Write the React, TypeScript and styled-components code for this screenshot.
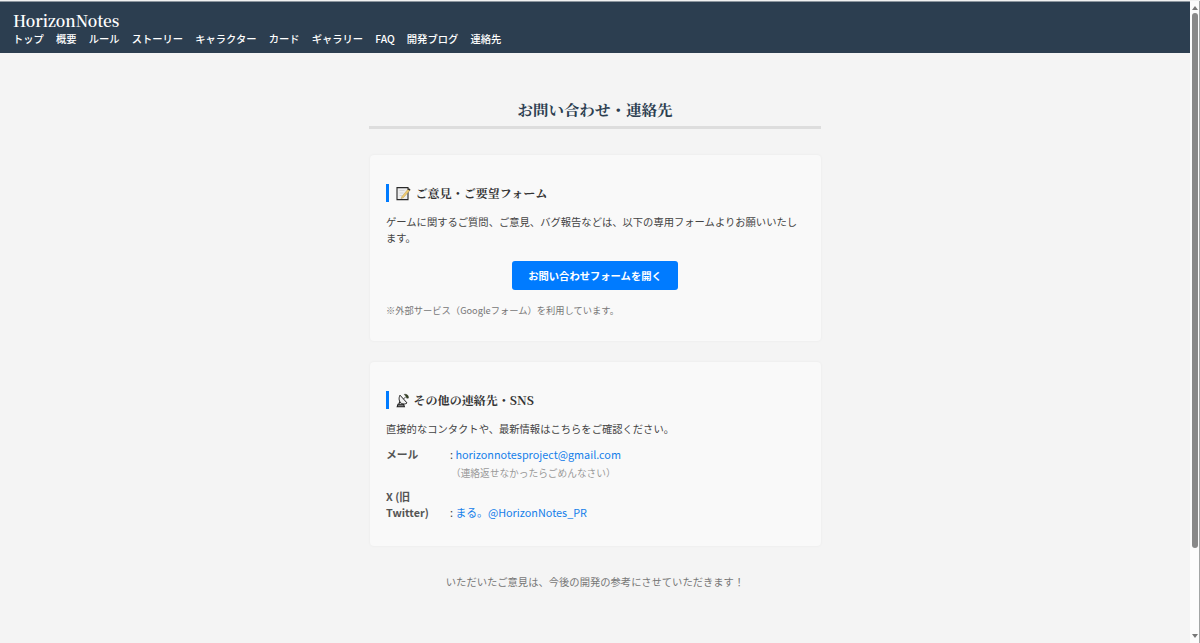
import React from "react";
import styled, { createGlobalStyle } from "styled-components";

const sans = `"Noto Sans CJK JP", sans-serif`;
const serif = `"Noto Serif JP", "Noto Serif CJK JP", "Liberation Serif", "Noto Sans CJK JP", serif`;

const GlobalStyle = createGlobalStyle`
  * { box-sizing: border-box; }
  body { margin: 0; background: #f4f4f4; overflow: hidden; }
  h1, h2, h3, p, dl, dd, dt { margin: 0; }
  a { color: inherit; text-decoration: none; }
`;

const Screen = styled.div`
  display: flex;
  height: 643px;
  overflow: hidden;
  background: #f4f4f4;
  border-top: 1px solid #f1f1f1;
  font-family: ${sans};
  font-size: 10.31px;
  line-height: 15.5px;
  color: #444;
`;

const Page = styled.div`
  width: 1190px;
  flex: none;
`;

const Header = styled.header`
  height: 52px;
  padding: 8px 13px 0;
  border-top: 1px solid #8d969f;
  background: #2c3e50;
  color: #fff;
`;

const Brand = styled.h1`
  font: 600 15.45px/20px ${serif};
  white-space: nowrap;
`;

const Nav = styled.nav`
  display: flex;
  gap: 12.1px;
  margin-top: 1px;
  font-weight: 500;
  line-height: 16px;
  white-space: nowrap;
`;

const Main = styled.main`
  width: 452px;
  margin: 0 auto;
  padding-top: 45px;
`;

const Title = styled.h2`
  height: 31px;
  border-bottom: 3px solid #ddd;
  color: #2c3e50;
  font: 700 15.5px/23px ${serif};
  text-align: center;
`;

const Card = styled.section<{ $height: number; $gap: number }>`
  width: 451px;
  height: ${(p) => p.$height}px;
  margin: ${(p) => p.$gap}px 0 0 1px;
  padding: 29px 16px 0;
  border-radius: 4px;
  background: #f9f9f9;
  box-shadow: 0 0 3px rgba(0, 0, 0, 0.05);
`;

const CardTitle = styled.h3`
  display: flex;
  align-items: center;
  height: 18px;
  padding-left: 7px;
  border-left: 3px solid #007bff;
  color: #333;
  font: 700 12.06px/18px ${serif};
  white-space: nowrap;
`;

const Icon = styled.svg<{ $gap: number }>`
  width: 15px;
  height: 16px;
  flex: none;
  margin-right: ${(p) => p.$gap}px;
`;

const Text = styled.p`
  margin-top: 12px;
`;

const Button = styled.a`
  display: block;
  width: 166px;
  height: 29px;
  margin: 16px auto 0 126px;
  border-radius: 3px;
  background: #007bff;
  color: #fff;
  font-weight: 700;
  line-height: 29px;
  text-align: center;
`;

const Note = styled.p`
  margin-top: 13px;
  color: #777;
  font-size: 9.28px;
`;

const Contact = styled.dl<{ $gap: number }>`
  display: grid;
  grid-template-columns: 64px 1fr;
  align-items: end;
  margin-top: ${(p) => p.$gap}px;
`;

const Label = styled.dt`
  width: 52px;
  font-weight: 700;
  color: #555;
  font-size: 10.8px;
`;

const Value = styled.dd`
  white-space: nowrap;
  font-size: 10.83px;
`;

const Link = styled.a`
  color: #1580ea;
`;

const Remark = styled.p`
  margin: 4px 0 0 65px;
  color: #999;
  font-size: 9.7px;
`;

const Footer = styled.p`
  margin-top: 28px;
  color: #777;
  text-align: center;
`;

const ScrollBar = styled.aside`
  display: flex;
  flex-direction: column;
  align-items: center;
  width: 10px;
  height: 643px;
  background: #fcfcfc;
  border-right: 1px solid #a3a6a6;
`;

const Arrow = styled.i<{ $down?: boolean }>`
  margin-top: ${(p) => (p.$down ? 86 : 5)}px;
  border: 3px solid transparent;
  border-top: ${(p) => (p.$down ? "4px solid #777" : "0")};
  border-bottom: ${(p) => (p.$down ? "0" : "4px solid #777")};
`;

const Thumb = styled.div`
  width: 6px;
  height: 535px;
  margin-top: 3px;
  border-radius: 3px;
  background: #898989;
`;

const links = ["トップ", "概要", "ルール", "ストーリー", "キャラクター", "カード", "ギャラリー", "FAQ", "開発ブログ", "連絡先"];

const MemoIcon = () => (
  <Icon viewBox="0 0 15 16" $gap={4.5}>
    <path d="M1 2.6h11v12H1z" fill="#eee" stroke="#292929" strokeWidth="1.1" />
    <path d="M3.5 5.5h5M3.5 8h4M3.5 10.5h3" stroke="#d5d5d5" />
    <path d="M5.5 12 12.3 3.8l1.8 1.4-6.8 7.6-2.2.8z" fill="#f0cc70" stroke="#a98b4b" strokeWidth=".4" />
    <path d="m11.7 4.4 1-1.4 1.8 1.4-1 1.3z" fill="#303030" />
  </Icon>
);

const DishIcon = () => (
  <Icon viewBox="0 0 15 16" $gap={2.5}>
    <path d="M2 12.2h5.6l.8 2.5H1.2z" fill="#777" stroke="#222" strokeWidth="1.1" />
    <path d="M2.8 12 4 9.2" stroke="#222" strokeWidth="1.1" />
    <path d="M4 3.2C2.4 6.2 3 9.8 5.5 11.4c1.8 1 4 .8 5.5-.5z" fill="#f0f0f0" stroke="#222" strokeWidth="1" />
    <path d="M7.4 7.1 9.8 4.7" stroke="#222" strokeWidth=".8" />
    <path d="M8.2 2.3c2.5-.6 4.6 1 4.3 3.8l-1.7.2-1-2z" fill="#35451f" stroke="#222" strokeWidth=".4" />
  </Icon>
);

export default function App() {
  return (
    <>
      <GlobalStyle />
      <Screen>
        <Page>
          <Header>
            <Brand>HorizonNotes</Brand>
            <Nav>{links.map((label) => <a key={label}>{label}</a>)}</Nav>
          </Header>
          <Main>
            <Title>お問い合わせ・連絡先</Title>
            <Card $height={186} $gap={26}>
              <CardTitle><MemoIcon />ご意見・ご要望フォーム</CardTitle>
              <Text>ゲームに関するご質問、ご意見、バグ報告などは、以下の専用フォームよりお願いいたします。</Text>
              <Button>お問い合わせフォームを開く</Button>
              <Note>※外部サービス（Googleフォーム）を利用しています。</Note>
            </Card>
            <Card $height={184} $gap={21}>
              <CardTitle><DishIcon />その他の連絡先・SNS</CardTitle>
              <Text>直接的なコンタクトや、最新情報はこちらをご確認ください。</Text>
              <Contact $gap={10}>
                <Label>メール</Label>
                <Value>: <Link>horizonnotesproject@gmail.com</Link></Value>
              </Contact>
              <Remark>（連絡返せなかったらごめんなさい）</Remark>
              <Contact $gap={7.8}>
                <Label>X (旧 Twitter)</Label>
                <Value>: <Link>まる。@HorizonNotes_PR</Link></Value>
              </Contact>
            </Card>
            <Footer>いただいたご意見は、今後の開発の参考にさせていただきます！</Footer>
          </Main>
        </Page>
        <ScrollBar>
          <Arrow />
          <Thumb />
          <Arrow $down />
        </ScrollBar>
      </Screen>
    </>
  );
}
